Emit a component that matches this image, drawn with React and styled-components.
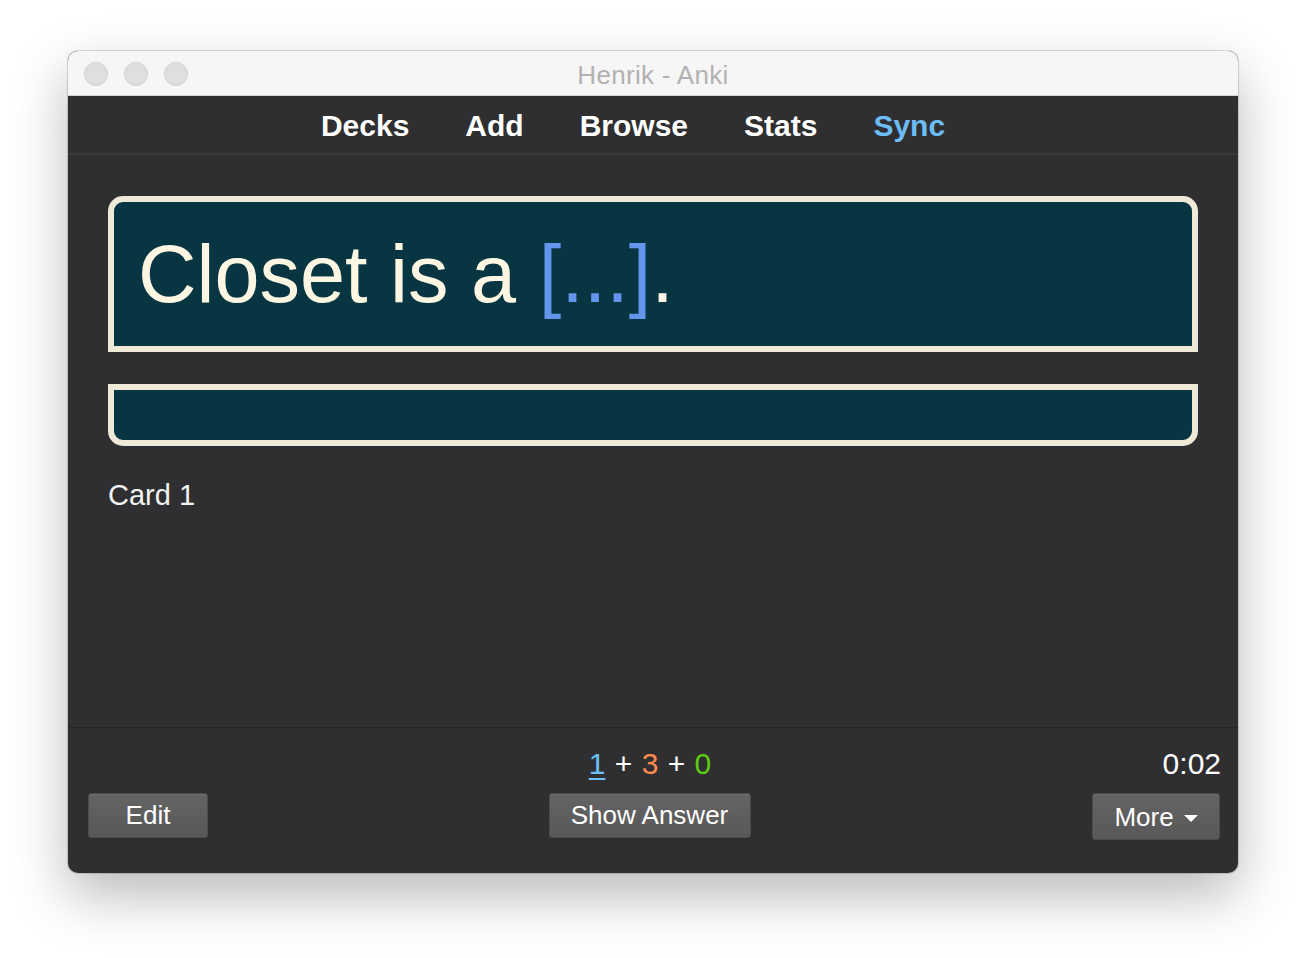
import React from "react";
import styled, { createGlobalStyle } from "styled-components";

const GlobalStyle = createGlobalStyle`
  html, body {
    margin: 0;
    padding: 0;
    background: #ffffff;
  }
  body {
    font-family: "Liberation Sans", Arial, sans-serif;
  }
`;

const Page = styled.div`
  padding: 51px 68px 85px;
`;

const Window = styled.div`
  width: 1170px;
  height: 822px;
  display: flex;
  flex-direction: column;
  border-radius: 10px;
  overflow: hidden;
  background: #2f2f31;
  box-shadow: 0 22px 55px rgba(0, 0, 0, 0.28), 0 0 0 1px rgba(0, 0, 0, 0.14);
`;

const TitleBar = styled.div`
  height: 44px;
  flex: none;
  display: grid;
  grid-template-columns: 1fr auto 1fr;
  align-items: center;
  padding: 0 16px;
  background: #f6f6f6;
  border-bottom: 1px solid #d4d4d4;
`;

const Lights = styled.div`
  display: flex;
  gap: 16px;
  margin-top: 2px;
`;

const Light = styled.span`
  width: 22px;
  height: 22px;
  border-radius: 50%;
  background: #dfdfdf;
  border: 1px solid #d0d0d0;
`;

const Title = styled.div`
  padding-top: 4px;
  font-size: 26px;
  color: #b2b2b2;
  letter-spacing: 0.3px;
`;

const Toolbar = styled.nav`
  height: 55px;
  flex: none;
  padding: 2px 40px 0 0;
  display: flex;
  justify-content: center;
  border-bottom: 2px solid #39393b;
`;

const NavItem = styled.span`
  padding: 0 28px;
  line-height: 55px;
  font-size: 30px;
  font-weight: bold;
  color: ${(p) => (p.$active ? "#6cbdf6" : "#ffffff")};
`;

const Main = styled.main`
  flex: 1;
  padding: 41px 40px 0;
`;

const Field = styled.div`
  background: #073642;
  border: 6px solid #efe9d8;
  border-radius: ${(p) => (p.$bottom ? "0 0 15px 15px" : "15px 15px 0 0")};
  height: ${(p) => p.$height}px;
  box-sizing: border-box;
`;

const Question = styled(Field)`
  padding: 32px 24px;
  font-size: 81px;
  line-height: 80px;
  color: #fdf6e3;
  margin-bottom: 32px;
`;

const Cloze = styled.span`
  color: #6495ed;
`;

const CardName = styled.div`
  margin-top: 33px;
  font-size: 29px;
  color: #f2f2f2;
`;

const Bottom = styled.footer`
  height: 146px;
  flex: none;
  box-sizing: border-box;
  border-top: 1px solid #252527;
  padding: 19px 18px 0 20px;
  display: grid;
  grid-template-columns: 1fr auto 1fr;
  grid-template-rows: 34px auto;
  row-gap: 12px;
  color: #ffffff;
`;

const Counts = styled.div`
  grid-column: 2;
  justify-self: center;
  margin-right: 8px;
  font-size: 30px;
  word-spacing: 1px;
`;

const Count = styled.span`
  color: ${(p) => p.$color};
  text-decoration: ${(p) => (p.$current ? "underline" : "none")};
  text-decoration-thickness: 2px;
  text-underline-offset: 4px;
`;

const Timer = styled.div`
  grid-column: 3;
  justify-self: end;
  margin-right: -1px;
  font-size: 30px;
`;

const Button = styled.button`
  grid-row: 2;
  height: ${(p) => p.$height || 45}px;
  width: ${(p) => p.$width}px;
  padding: 0;
  display: flex;
  align-items: center;
  justify-content: center;
  gap: 10px;
  font-family: "Liberation Sans", Arial, sans-serif;
  font-size: 26px;
  color: #ffffff;
  background: linear-gradient(#646464, #585858);
  border: 1px solid #4c4c4c;
  border-radius: 3px;
  box-shadow: inset 0 1px 0 rgba(255, 255, 255, 0.06);
`;

const LeftButton = styled(Button)`
  grid-column: 1;
  justify-self: start;
`;

const CenterButton = styled(Button)`
  grid-column: 2;
  justify-self: center;
  margin-right: 9px;
`;

const RightButton = styled(Button)`
  grid-column: 3;
  justify-self: end;
  padding-top: 2px;
`;

const Caret = styled.span`
  width: 0;
  height: 0;
  border-left: 7.5px solid transparent;
  border-right: 7.5px solid transparent;
  border-top: 7px solid #ffffff;
  margin-top: 2px;
`;

const App = () => {
  const nav = ["Decks", "Add", "Browse", "Stats", "Sync"];

  return (
    <>
      <GlobalStyle />
      <Page>
        <Window>
          <TitleBar>
            <Lights>
              <Light />
              <Light />
              <Light />
            </Lights>
            <Title>Henrik - Anki</Title>
            <span />
          </TitleBar>
          <Toolbar>
            {nav.map((item) => (
              <NavItem key={item} $active={item === "Sync"}>
                {item}
              </NavItem>
            ))}
          </Toolbar>
          <Main>
            <Question $height={156}>
              Closet is a <Cloze>[...]</Cloze>.
            </Question>
            <Field $bottom $height={62} />
            <CardName>Card 1</CardName>
          </Main>
          <Bottom>
            <Counts>
              <Count $color="#6cc0f7" $current>1</Count> +{" "}
              <Count $color="#ff8b4f">3</Count> +{" "}
              <Count $color="#5ecb0f">0</Count>
            </Counts>
            <Timer>0:02</Timer>
            <LeftButton $width={120}>Edit</LeftButton>
            <CenterButton $width={202}>Show Answer</CenterButton>
            <RightButton $width={128} $height={47}>
              More <Caret />
            </RightButton>
          </Bottom>
        </Window>
      </Page>
    </>
  );
};

export default App;
